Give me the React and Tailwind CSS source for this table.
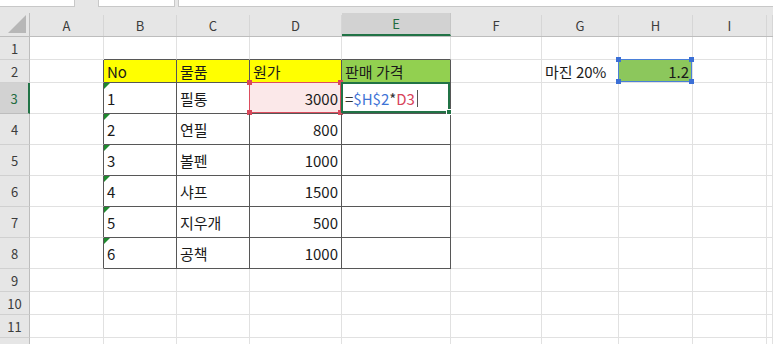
import React from "react";

const COLS = ["A", "B", "C", "D", "E", "F", "G", "H", "I", ""];
const ROW_H = [23, 23, 31, 31, 31, 31, 31, 31, 23, 23, 23, 23];

const items = [
  ["1", "필통", "3000"],
  ["2", "연필", "800"],
  ["3", "볼펜", "1000"],
  ["4", "샤프", "1500"],
  ["5", "지우개", "500"],
  ["6", "공책", "1000"],
];

const GRID =
  "grid grid-cols-[30px_74px_73px_73px_92px_109px_91px_77px_74px_74px_1fr]";

function Handle({ className }) {
  return <span className={`absolute w-[5px] h-[5px] ${className}`} />;
}

function Cell({ children, className = "", align = "left", inner }) {
  return (
    <div
      className={`relative flex items-center ${
        align === "right" ? "justify-end pr-[3px]" : "pl-[3px]"
      } ${className}`}
    >
      {inner}
      <span className="relative whitespace-nowrap">{children}</span>
    </div>
  );
}

function Corner() {
  return (
    <span className="absolute left-0 top-0 w-0 h-0 border-t-[6px] border-r-[6px] border-t-[#1e8a2e] border-r-transparent" />
  );
}

function renderCell(r, c) {
  // r: 1-based row, c: 0-based column index into COLS (0 = A)
  const grid = "border-r border-b border-[#e1e1e1]";
  const inTable = r >= 2 && r <= 8 && c >= 1 && c <= 4;
  let cls = grid;
  if (inTable) cls = "border-r border-b border-[#575757]";
  else if (r === 1 && c >= 1 && c <= 4) cls = "border-r border-b border-r-[#e1e1e1] border-b-[#575757]";
  else if (c === 0 && r >= 2 && r <= 8) cls = "border-r border-b border-r-[#575757] border-b-[#e1e1e1]";

  if (r === 2) {
    if (c === 1) return <Cell className={`${cls} bg-[#ffff00]`}>No</Cell>;
    if (c === 2) return <Cell className={`${cls} bg-[#ffff00]`}>물품</Cell>;
    if (c === 3) return <Cell className={`${cls} bg-[#ffff00]`}>원가</Cell>;
    if (c === 4) return <Cell className={`${cls} bg-[#92d050]`}>판매 가격</Cell>;
    if (c === 6) return <Cell className={cls}>마진 20%</Cell>;
    if (c === 7)
      return (
        <Cell
          className={`${cls} bg-[#8cc75c]`}
          align="right"
          inner={
            <span className="absolute -left-px -top-px right-0 bottom-0 border border-[#4a7fd8]">
              <Handle className="-left-[3px] -top-[3px] bg-[#3b6fd6]" />
              <Handle className="-right-[3px] -top-[3px] bg-[#3b6fd6]" />
              <Handle className="-left-[3px] -bottom-[3px] bg-[#3b6fd6]" />
              <Handle className="-right-[3px] -bottom-[3px] bg-[#3b6fd6]" />
            </span>
          }
        >
          1.2
        </Cell>
      );
  }
  if (r >= 3 && r <= 8) {
    const [no, name, price] = items[r - 3];
    if (c === 1)
      return (
        <Cell className={cls} inner={<Corner />}>
          {no}
        </Cell>
      );
    if (c === 2) return <Cell className={cls}>{name}</Cell>;
    if (c === 3) {
      if (r === 3)
        return (
          <Cell
            className={`${cls} bg-[#fbe8e9]`}
            align="right"
            inner={
              <span className="absolute -left-px -top-px right-0 bottom-0 border border-[#dc4d5e]">
                <Handle className="-left-[3px] -top-[3px] bg-[#d8475a]" />
                <Handle className="-right-[3px] -top-[3px] bg-[#d8475a]" />
                <Handle className="-left-[3px] -bottom-[3px] bg-[#d8475a]" />
                <Handle className="-right-[3px] -bottom-[3px] bg-[#d8475a]" />
              </span>
            }
          >
            {price}
          </Cell>
        );
      return (
        <Cell className={cls} align="right">
          {price}
        </Cell>
      );
    }
    if (c === 4 && r === 3)
      return (
        <Cell
          className={cls}
          inner={
            <span className="absolute -left-px -top-px right-0 bottom-0 border-2 border-[#217346]">
              <span className="absolute -right-[4px] -bottom-[4px] w-[6px] h-[6px] bg-[#217346] border border-white" />
            </span>
          }
        >
          <span className="flex items-center">
            <span className="text-[#333]">=</span>
            <span className="text-[#3f74d6]">$H$2</span>
            <span className="text-[#333]">*</span>
            <span className="text-[#d8435a]">D3</span>
            <span className="ml-[2px] w-px h-[17px] bg-[#555]" />
          </span>
        </Cell>
      );
  }
  return <div className={cls} />;
}

export default function App() {
  return (
    <div className="w-[773px] h-[344px] overflow-hidden bg-white text-[15px] leading-none text-[#1a1a1a] font-['Noto_Sans_CJK_KR','Noto_Sans',sans-serif]">
      {/* toolbar strip: name box, function area, formula bar */}
      <div className="h-[13px] bg-[#e6e6e6] flex items-start gap-[3px]">
        <div className="w-[75px] h-[7px] bg-white border-r border-b border-[#c8c8c8]" />
        <div className="ml-[20px] w-[77px] h-[7px] bg-white border-x border-b border-[#c8c8c8]" />
        <div className="flex-1 h-[7px] bg-white border-l border-b border-[#c8c8c8]" />
      </div>

      {/* column headers */}
      <div className={`${GRID} h-[24px] bg-[#e6e6e6] text-[13px] text-[#3c3c3c] border-b border-[#bdbdbd]`}>
        <div className="relative border-r border-[#bdbdbd]">
          <span className="absolute right-[3px] bottom-[3px] w-0 h-0 border-b-[18px] border-l-[18px] border-b-[#b7b7b7] border-l-transparent" />
        </div>
        {COLS.map((l, i) =>
          l === "E" ? (
            <div
              key={i}
              className="flex items-center justify-center bg-[#d2d2d2] text-[#1f6b3f] border-r border-[#c6c6c6] border-b-2 border-b-[#217346]"
            >
              {l}
            </div>
          ) : (
            <div
              key={i}
              className="flex items-center justify-center border-r border-[#d6d6d6] mt-[2px]"
            >
              {l}
            </div>
          )
        )}
      </div>

      {/* sheet rows; the last one is only partly in view */}
      {ROW_H.map((h, ri) => {
        const r = ri + 1;
        const label = r <= 11 ? r : "";
        return (
          <div key={r} className={GRID} style={{ height: h }}>
            {r === 3 ? (
              <div className="flex items-center justify-center bg-[#d2d2d2] text-[13px] text-[#1f6b3f] border-b border-[#bdbdbd] border-r-2 border-r-[#217346]">
                {label}
              </div>
            ) : (
              <div className="flex items-center justify-center bg-[#e6e6e6] text-[13px] text-[#3c3c3c] border-b border-[#d0d0d0] border-r border-r-[#bdbdbd]">
                {label}
              </div>
            )}
            {COLS.map((_, c) => (
              <React.Fragment key={c}>{renderCell(r, c)}</React.Fragment>
            ))}
          </div>
        );
      })}
    </div>
  );
}
